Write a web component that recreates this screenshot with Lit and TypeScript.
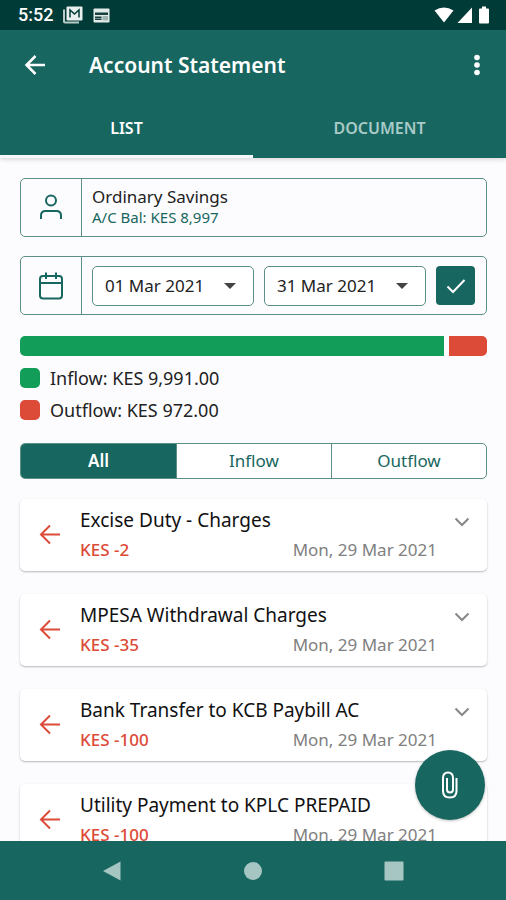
import { LitElement, html, css } from "lit";
import { customElement, state } from "lit/decorators.js";
import { classMap } from "lit/directives/class-map.js";

interface Transaction {
  title: string;
  amount: string;
  date: string;
}

const TRANSACTIONS: Transaction[] = [
  { title: "Excise Duty - Charges", amount: "KES -2", date: "Mon, 29 Mar 2021" },
  { title: "MPESA Withdrawal Charges", amount: "KES -35", date: "Mon, 29 Mar 2021" },
  { title: "Bank Transfer to KCB Paybill AC", amount: "KES -100", date: "Mon, 29 Mar 2021" },
  { title: "Utility Payment to KPLC PREPAID", amount: "KES -100", date: "Mon, 29 Mar 2021" },
];

const FILTERS = ["All", "Inflow", "Outflow"];
const TABS = ["LIST", "DOCUMENT"];

@customElement("app-root")
export class AppRoot extends LitElement {
  @state() private tab = "LIST";
  @state() private filter = "All";

  static styles = css`
    :host {
      --teal: #186660;
      --line: #5b8f87;
      --red: #dc4b38;
      --green: #129e58;
      display: flex;
      flex-direction: column;
      height: 100vh;
      overflow: hidden;
      position: relative;
      background: #fcfcfe;
      color: #222;
      font-family: "Noto Sans", "Open Sans", sans-serif;
      font-size: 17px;
      line-height: 20px;
    }
    * {
      box-sizing: border-box;
    }
    button,
    select {
      font: inherit;
      color: inherit;
      background: none;
      border: 0;
      margin: 0;
      padding: 0;
      cursor: pointer;
    }
    svg {
      display: block;
      flex: none;
    }
    .stroke {
      fill: none;
      stroke: currentColor;
      stroke-width: 2;
    }
    .status {
      display: flex;
      align-items: center;
      gap: 10px;
      height: 30px;
      padding: 0 15px 0 18px;
      background: #003b37;
      color: #fff;
      font-family: Roboto, sans-serif;
      font-size: 18px;
      font-weight: 500;
      line-height: 30px;
    }
    .signals {
      display: flex;
      align-items: center;
      gap: 3px;
      margin-left: auto;
    }
    .header {
      background: var(--teal);
      color: #fff;
      box-shadow: 0 2px 4px #00000020;
      z-index: 1;
    }
    .bar {
      display: flex;
      align-items: center;
      height: 70px;
      padding: 0 17px 0 24px;
    }
    .title {
      flex: 1;
      margin: 0 0 0 43px;
      font-size: 21px;
      line-height: 28px;
      font-weight: 600;
    }
    .tabs {
      display: grid;
      grid-template-columns: 1fr 1fr;
    }
    .tab {
      height: 58px;
      padding-bottom: 2px;
      border-top: 3px solid transparent;
      border-bottom: 3px solid transparent;
      font-size: 16px;
      font-weight: 600;
      color: #a9cbc8;
    }
    .tab.on {
      color: #fff;
      border-bottom-color: #f4f8fa;
    }
    .content {
      flex: 1;
      min-height: 0;
      overflow-y: auto;
      scrollbar-width: none;
      padding: 20px 19px 20px 20px;
    }
    .field {
      display: flex;
      width: 100%;
      min-height: 59px;
      border: 1px solid var(--line);
      border-radius: 5px;
      margin-bottom: 19px;
      text-align: left;
      color: #222;
    }
    .field-icon {
      display: grid;
      place-items: center;
      width: 61px;
      border-right: 1px solid var(--line);
      color: var(--teal);
    }
    .account {
      padding: 8px 10px;
    }
    .account-name,
    .account-balance {
      display: block;
    }
    .account-balance {
      font-size: 15px;
      color: var(--teal);
    }
    .dates {
      flex: 1;
      display: flex;
      align-items: center;
      gap: 10px;
      padding: 0 11px 0 10px;
    }
    .date {
      flex: 1;
      display: grid;
      align-items: center;
    }
    .date select {
      grid-area: 1 / 1;
      appearance: none;
      width: 100%;
      height: 40px;
      padding: 0 12px;
      border: 1px solid var(--line);
      border-radius: 5px;
      background: #fff;
      color: #222;
    }
    .date svg {
      grid-area: 1 / 1;
      justify-self: end;
      margin-right: 17px;
      pointer-events: none;
      fill: #444;
    }
    .apply {
      display: grid;
      place-items: center;
      width: 39px;
      height: 39px;
      border-radius: 4px;
      background: var(--teal);
      color: #fff;
    }
    .split {
      display: flex;
      gap: 5px;
      height: 20px;
      margin-top: 21px;
      border-radius: 5px;
      overflow: hidden;
    }
    .split-in {
      flex: 11;
      background: var(--green);
    }
    .split-out {
      flex: 1;
      background: var(--red);
    }
    .legend {
      margin: 12px 0 23px;
      padding: 0;
      list-style: none;
      display: grid;
      gap: 12px;
    }
    .legend li {
      display: flex;
      gap: 10px;
      font-size: 18px;
    }
    .swatch {
      width: 20px;
      height: 20px;
      border-radius: 5px;
    }
    .swatch.in {
      background: var(--green);
    }
    .swatch.out {
      background: var(--red);
    }
    .filters {
      display: grid;
      grid-template-columns: repeat(3, 1fr);
      border: 1px solid var(--line);
      border-radius: 5px;
      overflow: hidden;
      background: #fff;
      color: var(--teal);
    }
    .filter {
      height: 34px;
    }
    .filter + .filter {
      border-left: 1px solid var(--line);
    }
    .filter.on {
      background: var(--teal);
      color: #fff;
      font-weight: 600;
    }
    .cards {
      display: grid;
      gap: 23px;
      margin: 20px 0 0;
      padding: 0;
      list-style: none;
    }
    .card {
      display: grid;
      grid-template-columns: 60px 1fr 50px;
      border-radius: 5px;
      background: #fff;
      box-shadow: 0 1px 2px #00000045;
    }
    .card-icon {
      display: grid;
      place-items: center;
      color: var(--red);
    }
    .card-text {
      padding: 7px 0;
    }
    .card-title {
      margin: 0;
      font-size: 19px;
      line-height: 29px;
      font-weight: 400;
      white-space: nowrap;
      color: #111;
    }
    .card-row {
      display: flex;
      justify-content: space-between;
      line-height: 29px;
    }
    .amount {
      color: var(--red);
      font-weight: 500;
    }
    .when {
      color: #808080;
    }
    .expand {
      display: grid;
      place-items: center;
      height: 46px;
      color: #888;
    }
    .fab {
      position: absolute;
      right: 21px;
      bottom: 80px;
      display: grid;
      place-items: center;
      width: 70px;
      height: 70px;
      border-radius: 50%;
      background: var(--teal);
      color: #fff;
      box-shadow: 0 1px 3px #00000040;
      z-index: 1;
    }
    .nav {
      display: grid;
      grid-template-columns: repeat(3, 1fr);
      height: 59px;
      padding: 0 42px;
      background: var(--teal);
      color: #a6c6c3;
    }
    .nav button {
      display: grid;
      place-items: center;
    }
    .nav svg {
      fill: currentColor;
    }
  `;

  private renderStatus() {
    return html`<div class="status">
      <span class="clock">5:52</span>
      <svg width="20" height="18" viewBox="0 0 20 18" aria-hidden="true">
        <path d="M1 3.500V15.500Q1 16.500 2 16.500H16" fill="none" stroke="#b9cbc9" stroke-width="2" />
        <rect x="3.500" y="0.500" width="16" height="14" rx="1" fill="#e9efee" />
        <path d="M7 11.500V4L11.500 8L16 4V11.500" fill="none" stroke="#003b37" stroke-width="1.500" />
      </svg>
      <svg width="17" height="15" viewBox="0 0 17 15" aria-hidden="true">
        <rect x="0.500" y="0.500" width="16" height="14" rx="1" fill="#e3ebea" />
        <path d="M2 4.500H15V7H2ZM2 8.500H8.500V12H2Z" fill="#173f3c" />
        <path d="M2 10H8.500V10.500H2Z" fill="#e3ebea" />
        <path d="M9.500 8H15V12.500H9.500Z" fill="#9fb3b1" />
      </svg>
      <div class="signals">
        <svg width="20" height="16" viewBox="0 0 20 16" fill="#fff" aria-hidden="true">
          <path d="M0.500 3.500Q10-2.500 19.500 3.500L10 15.500Z" />
        </svg>
        <svg width="16" height="17" viewBox="0 0 16 17" fill="#fff" aria-hidden="true">
          <path d="M15 0.500V16H0.500Z" />
        </svg>
        <svg width="15" height="18" viewBox="0 0 15 18" fill="#fff" aria-hidden="true">
          <path d="M6 0.500H10V2.500H12Q13 2.500 13 3.500V16.500Q13 17.500 12 17.500H4Q3 17.500 3 16.500V3.500Q3 2.500 4 2.500H6Z" />
        </svg>
      </div>
    </div>`;
  }

  private renderDate(label: string, value: string) {
    return html`<div class="date">
      <select aria-label=${label}>
        <option>${value}</option>
      </select>
      <svg width="14" height="8" viewBox="0 0 14 8" aria-hidden="true"><path d="M1 1H13L7 7Z" /></svg>
    </div>`;
  }

  private renderCard(t: Transaction) {
    return html`<li class="card">
      <span class="card-icon">
        <svg class="stroke" width="24" height="24" viewBox="0 0 24 24" aria-hidden="true">
          <path d="M22 11.500H3M12 2.500L3 11.500L12 20.500" />
        </svg>
      </span>
      <div class="card-text">
        <h2 class="card-title">${t.title}</h2>
        <div class="card-row">
          <span class="amount">${t.amount}</span>
          <span class="when">${t.date}</span>
        </div>
      </div>
      <button class="expand" aria-label="Expand ${t.title}">
        <svg class="stroke" width="16" height="10" viewBox="0 0 16 10" aria-hidden="true">
          <path d="M1.500 1.500L8 8L14.500 1.500" />
        </svg>
      </button>
    </li>`;
  }

  render() {
    return html`
      ${this.renderStatus()}
      <header class="header">
        <div class="bar">
          <button aria-label="Back">
            <svg width="22" height="22" viewBox="0 0 22 22" fill="none" stroke="currentColor" stroke-width="2.500" aria-hidden="true">
              <path d="M21 11H3M11.500 2L2.500 11L11.500 20" />
            </svg>
          </button>
          <h1 class="title">Account Statement</h1>
          <button aria-label="More options">
            <svg width="24" height="24" viewBox="0 0 24 24" fill="currentColor" aria-hidden="true">
              <circle cx="12" cy="4.500" r="2.800" />
              <circle cx="12" cy="12" r="2.800" />
              <circle cx="12" cy="19.500" r="2.800" />
            </svg>
          </button>
        </div>
        <div class="tabs" role="tablist">
          ${TABS.map(
            (t) => html`<button
              role="tab"
              aria-selected=${this.tab === t}
              class=${classMap({ tab: true, on: this.tab === t })}
              @click=${() => (this.tab = t)}
            >${t}</button>`
          )}
        </div>
      </header>
      <main class="content">
        <button class="field">
          <span class="field-icon">
            <svg class="stroke" width="24" height="28" viewBox="0 0 24 28" aria-hidden="true">
              <circle cx="12" cy="6.500" r="5" />
              <path d="M2 25V21.500Q2 17 6.500 17H17.500Q22 17 22 21.500V25" />
            </svg>
          </span>
          <span class="account">
            <span class="account-name">Ordinary Savings</span>
            <span class="account-balance">A/C Bal: KES 8,997</span>
          </span>
        </button>
        <div class="field">
          <span class="field-icon">
            <svg class="stroke" width="26" height="30" viewBox="0 0 26 30" aria-hidden="true">
              <rect x="2" y="5" width="22" height="22.500" rx="3" />
              <path d="M2 12H24M8 1.500V8M18 1.500V8" />
            </svg>
          </span>
          <div class="dates">
            ${this.renderDate("Start date", "01 Mar 2021")}
            ${this.renderDate("End date", "31 Mar 2021")}
            <button class="apply" aria-label="Apply dates">
              <svg class="stroke" width="20" height="16" viewBox="0 0 20 16" aria-hidden="true">
                <path d="M1.500 8.500L7 14L18.500 2" />
              </svg>
            </button>
          </div>
        </div>
        <div class="split" aria-hidden="true">
          <div class="split-in"></div>
          <div class="split-out"></div>
        </div>
        <ul class="legend">
          <li><span class="swatch in"></span>Inflow: KES 9,991.00</li>
          <li><span class="swatch out"></span>Outflow: KES 972.00</li>
        </ul>
        <div class="filters">
          ${FILTERS.map(
            (f) => html`<button
              aria-pressed=${this.filter === f}
              class=${classMap({ filter: true, on: this.filter === f })}
              @click=${() => (this.filter = f)}
            >${f}</button>`
          )}
        </div>
        <ul class="cards">
          ${TRANSACTIONS.map((t) => this.renderCard(t))}
        </ul>
      </main>
      <button class="fab" aria-label="Attachments">
        <svg width="18" height="28" viewBox="0 0 18 28" fill="none" stroke="currentColor" stroke-width="2" aria-hidden="true">
          <path d="M15.500 7V20Q15.500 26.500 8.800 26.500Q2 26.500 2 20V7Q2 1.500 7 1.500Q12 1.500 12 7V18.500Q12 21.500 9 21.500Q6 21.500 6 18.500V7" />
        </svg>
      </button>
      <nav class="nav">
        <button aria-label="System back">
          <svg width="20" height="20" viewBox="0 0 20 20"><path d="M18.500 0.500V19.500L1 10Z" /></svg>
        </button>
        <button aria-label="Home">
          <svg width="20" height="20" viewBox="0 0 20 20"><circle cx="10" cy="10" r="9" /></svg>
        </button>
        <button aria-label="Recent apps">
          <svg width="20" height="20" viewBox="0 0 20 20"><rect x="0.500" y="0.500" width="19" height="19" rx="1" /></svg>
        </button>
      </nav>
    `;
  }
}
